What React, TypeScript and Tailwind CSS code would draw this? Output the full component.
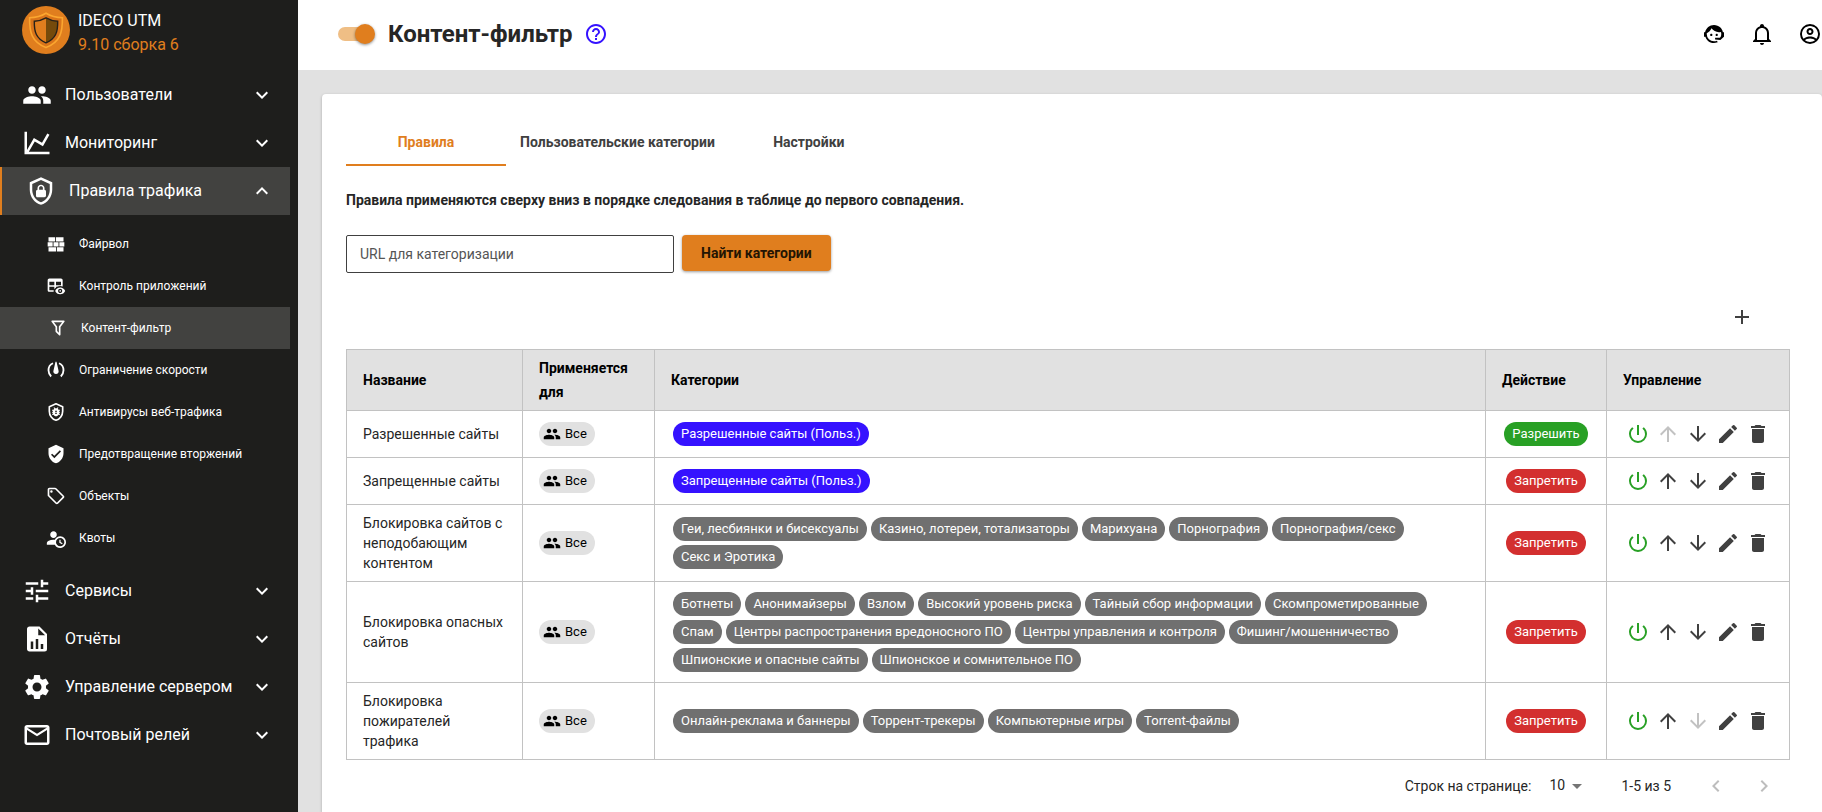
import React, { useState } from "react";
import {
  MdAdd,
  MdArrowDownward,
  MdArrowDropDown,
  MdArrowUpward,
  MdChevronLeft,
  MdChevronRight,
  MdDelete,
  MdEdit,
  MdExpandLess,
  MdExpandMore,
  MdHelpOutline,
  MdMailOutline,
  MdPeople,
  MdPowerSettingsNew,
  MdSettings,
  MdTune,
  MdVerifiedUser,
} from "react-icons/md";

type IconProps = { className?: string };

const glyph = (d: string) =>
  function Glyph({ className }: IconProps) {
    return (
      <svg viewBox="0 0 24 24" fill="currentColor" fillRule="evenodd" aria-hidden="true" className={className}>
        <path d={d} />
      </svg>
    );
  };

const ChartLine = glyph(
  "M16,11.78L20.24,4.45L21.97,5.45L16.74,14.5L10.23,10.75L5.46,19H22V21H2V3H4V17.54L9.5,8L16,11.78Z",
);
const ShieldLock = glyph(
  "M21,11C21,16.55 17.16,21.74 12,23C6.84,21.74 3,16.55 3,11V5L12,1L21,5V11M12,21C15.75,20 19,15.54 19,11.22V6.3L12,3.18L5,6.3V11.22C5,15.54 8.25,20 12,21M14.8,11V9.5C14.8,8.1 13.4,7 12,7C10.6,7 9.2,8.1 9.2,9.5V11C8.6,11 8,11.6 8,12.2V15.7C8,16.4 8.6,17 9.2,17H14.7C15.4,17 16,16.4 16,15.8V12.3C16,11.6 15.4,11 14.8,11M13.5,11H10.5V9.5C10.5,8.7 11.2,8.2 12,8.2C12.8,8.2 13.5,8.7 13.5,9.5V11Z",
);
const Wall = glyph(
  "M3,16H12V21H3V16M2,10H8V15H2V10M9,10H15V15H9V10M16,10H22V15H16V10M13,16H21V21H13V16M3,4H11V9H3V4M12,4H21V9H12V4Z",
);
const TableEye = glyph(
  "M17 16.88C17.56 16.88 18 17.32 18 17.88S17.56 18.88 17 18.88 16 18.43 16 17.88 16.44 16.88 17 16.88M17 13.88C19.73 13.88 22.06 15.54 23 17.88C22.06 20.22 19.73 21.88 17 21.88S11.94 20.22 11 17.88C11.94 15.54 14.27 13.88 17 13.88M17 15.38C15.62 15.38 14.5 16.5 14.5 17.88S15.62 20.38 17 20.38 19.5 19.26 19.5 17.88 18.38 15.38 17 15.38M18 3H4C2.9 3 2 3.9 2 5V17C2 18.1 2.9 19 4 19H9.42C9.26 18.68 9.12 18.34 9 18C9.12 17.66 9.26 17.32 9.42 17H4V13H10V15.97C10.55 15.11 11.23 14.37 12 13.76V13H13.15C14.31 12.36 15.62 12 17 12C18.06 12 19.07 12.21 20 12.59V5C20 3.9 19.1 3 18 3M10 11H4V7H10V11M18 11H12V7H18V11Z",
);
const FilterOutline = glyph(
  "M15,19.88C15.04,20.18 14.94,20.5 14.71,20.71C14.32,21.1 13.69,21.1 13.3,20.71L9.29,16.7C9.06,16.47 8.96,16.16 9,15.87V10.75L4.21,4.62C3.87,4.19 3.95,3.56 4.38,3.22C4.57,3.08 4.78,3 5,3H19C19.22,3 19.43,3.08 19.62,3.22C20.05,3.56 20.13,4.19 19.79,4.62L15,10.75V19.88M7.04,5L11,10.06V15.58L13,17.58V10.05L16.96,5H7.04Z",
);
const TagOutline = glyph(
  "M21.41 11.58L12.41 2.58A2 2 0 0 0 11 2H4A2 2 0 0 0 2 4V11A2 2 0 0 0 2.59 12.42L11.59 21.42A2 2 0 0 0 13 22A2 2 0 0 0 14.41 21.41L21.41 14.41A2 2 0 0 0 22 13A2 2 0 0 0 21.41 11.58M13 20L4 11V4H11L20 13M6.5 5A1.5 1.5 0 1 1 5 6.5A1.5 1.5 0 0 1 6.5 5Z",
);
const AccountClock = glyph(
  "M10.63,14.1C12.23,10.58 16.38,9.03 19.9,10.63C23.42,12.23 24.97,16.38 23.37,19.9C22.24,22.4 19.75,24 17,24C14.3,24 11.83,22.44 10.67,20H1V18C1.06,16.86 1.84,15.93 3.34,15.18C4.84,14.43 6.72,14.04 9,14C9.57,14 10.11,14.05 10.63,14.1M9,4C10.12,4.03 11.06,4.42 11.81,5.17C12.56,5.92 12.93,6.86 12.93,8C12.93,9.14 12.56,10.08 11.81,10.83C11.06,11.58 10.12,11.95 9,11.95C7.88,11.95 6.94,11.58 6.19,10.83C5.44,10.08 5.07,9.14 5.07,8C5.07,6.86 5.44,5.92 6.19,5.17C6.94,4.42 7.88,4.03 9,4M17,22A5,5 0 0,0 22,17A5,5 0 0,0 17,12A5,5 0 0,0 12,17A5,5 0 0,0 17,22M16,14H17.5V16.82L19.94,18.23L19.19,19.53L16,17.69V14Z",
);
const FileChart = glyph(
  "M13,9H18.5L13,3.5V9M6,2H14L20,8V20A2,2 0 0,1 18,22H6C4.89,22 4,21.1 4,20V4C4,2.89 4.89,2 6,2M7,20H9V14H7V20M11,20H13V12H11V20M15,20H17V16H15V20Z",
);
const FaceAgent = glyph(
  "M18.72,14.76C19.07,13.91 19.26,13 19.26,12C19.26,11.28 19.15,10.59 18.96,9.95C18.31,10.1 17.63,10.18 16.92,10.18C13.86,10.18 11.15,8.67 9.5,6.34C8.61,8.5 6.91,10.26 4.77,11.22C4.73,11.47 4.73,11.74 4.73,12A7.27,7.27 0 0,0 12,19.27C13.05,19.27 14.06,19.04 14.97,18.63C15.54,19.72 15.8,20.26 15.78,20.26C14.14,20.81 12.87,21.08 12,21.08C9.58,21.08 7.27,20.13 5.57,18.42C4.53,17.38 3.76,16.11 3.33,14.73H2V10.18H3.09C3.93,6.04 7.6,2.92 12,2.92C14.4,2.92 16.71,3.87 18.42,5.58C19.69,6.84 20.54,8.45 20.89,10.18H22V14.73H21.94L18.38,18L13.08,17.4V15.73H17.91L18.72,14.76M9.27,11.77C9.57,11.77 9.86,11.89 10.07,12.11C10.28,12.32 10.4,12.61 10.4,12.91C10.4,13.21 10.28,13.5 10.07,13.71C9.86,13.92 9.57,14.04 9.27,14.04C8.64,14.04 8.13,13.54 8.13,12.91C8.13,12.28 8.64,11.77 9.27,11.77M14.72,11.77C15.35,11.77 15.85,12.28 15.85,12.91C15.85,13.54 15.35,14.04 14.72,14.04C14.09,14.04 13.58,13.54 13.58,12.91A1.14,1.14 0 0,1 14.72,11.77Z",
);
const BellOutline = glyph(
  "M10 21H14C14 22.1 13.1 23 12 23S10 22.1 10 21M21 19V20H3V19L5 17V11C5 7.9 7 5.2 10 4.3V4C10 2.9 10.9 2 12 2S14 2.9 14 4V4.3C17 5.2 19 7.9 19 11V17L21 19M17 11C17 8.2 14.8 6 12 6S7 8.2 7 11V18H17V11Z",
);
const AccountCircle = glyph(
  "M12,2A10,10 0 0,0 2,12A10,10 0 0,0 12,22A10,10 0 0,0 22,12A10,10 0 0,0 12,2M7.07,18.28C7.5,17.38 10.12,16.5 12,16.5C13.88,16.5 16.5,17.38 16.93,18.28C15.57,19.36 13.86,20 12,20C10.14,20 8.43,19.36 7.07,18.28M18.36,16.83C16.93,15.09 13.46,14.5 12,14.5C10.54,14.5 7.07,15.09 5.64,16.83C4.62,15.5 4,13.82 4,12C4,7.59 7.59,4 12,4C16.41,4 20,7.59 20,12C20,13.82 19.38,15.5 18.36,16.83M12,6C10.06,6 8.5,7.56 8.5,9.5C8.5,11.44 10.06,13 12,13C13.94,13 15.5,11.44 15.5,9.5C15.5,7.56 13.94,6 12,6M12,11A1.5,1.5 0 0,1 10.5,9.5A1.5,1.5 0 0,1 12,8A1.5,1.5 0 0,1 13.5,9.5A1.5,1.5 0 0,1 12,11Z",
);

function SpeedGauge({ className }: IconProps) {
  return (
    <svg viewBox="0 0 24 24" aria-hidden="true" className={className}>
      <path
        d="M8.4 3.9C5 5.3 3 8.6 3 12.4C3 15.3 4.2 17.9 6.2 19.8M15.6 3.9C19 5.3 21 8.6 21 12.4C21 15.3 19.8 17.9 17.8 19.8"
        fill="none"
        stroke="currentColor"
        strokeWidth="2.2"
      />
      <path d="M11.4 2L9 12.6A3.2 3.2 0 1 0 15 12.6L12.6 2Z" fill="currentColor" />
    </svg>
  );
}

function ShieldBug({ className }: IconProps) {
  return (
    <svg viewBox="0 0 24 24" aria-hidden="true" className={className}>
      <path
        d="M12 2.1L20 5.6V11C20 16 16.6 20.7 12 21.9C7.4 20.7 4 16 4 11V5.6Z"
        fill="none"
        stroke="currentColor"
        strokeWidth="2"
        strokeLinejoin="round"
      />
      <path
        transform="translate(4.8 4.4) scale(0.6)"
        fill="currentColor"
        d="M20 8h-2.81c-.45-.78-1.07-1.45-1.82-1.96L17 4.41 15.59 3l-2.17 2.17C12.96 5.06 12.49 5 12 5s-.96.06-1.41.17L8.41 3 7 4.41l1.62 1.63C7.88 6.55 7.26 7.22 6.81 8H4v2h2.09c-.05.33-.09.66-.09 1v1H4v2h2v1c0 .34.04.67.09 1H4v2h2.81c1.04 1.79 2.97 3 5.19 3s4.15-1.21 5.19-3H20v-2h-2.09c.05-.33.09-.66.09-1v-1h2v-2h-2v-1c0-.34-.04-.67-.09-1H20V8zm-6 8h-4v-2h4v2zm0-4h-4v-2h4v2z"
      />
    </svg>
  );
}

function Logo() {
  return (
    <svg viewBox="0 0 48 48" role="img" aria-label="Ideco" className="size-12 shrink-0">
      <circle cx="24" cy="24" r="24" fill="#e07e1e" />
      <path
        d="M24 7.2C19 10.2 13.5 11.5 7.6 11.7C7.4 26 9.5 36 24 41.6C38.5 36 40.6 26 40.4 11.7C34.5 11.5 29 10.2 24 7.2Z"
        fill="#d9741a"
        stroke="#fba62f"
        strokeWidth="1.6"
      />
      <path d="M24 12C20 14.3 16.5 15.2 12.5 15.4C12.3 26 14.2 32.8 24 36.8Z" fill="#e07e1e" />
      <path d="M24 12C28 14.3 31.5 15.2 35.5 15.4C35.7 26 33.8 32.8 24 36.8Z" fill="#754a0b" />
      <path
        d="M24 11.8C20 14.1 16.5 15 12.3 15.2C12.1 26 14.2 32.8 24 36.8C33.8 32.8 35.9 26 35.7 15.2C31.5 15 28 14.1 24 11.8Z"
        fill="none"
        stroke="#26211a"
        strokeWidth="1.4"
      />
    </svg>
  );
}

type NavSection = {
  label: string;
  icon: React.ComponentType<IconProps>;
  children?: { label: string; icon: React.ComponentType<IconProps>; active?: boolean }[];
};

const NAV: NavSection[] = [
  { label: "Пользователи", icon: MdPeople },
  { label: "Мониторинг", icon: ChartLine },
  {
    label: "Правила трафика",
    icon: ShieldLock,
    children: [
      { label: "Файрвол", icon: Wall },
      { label: "Контроль приложений", icon: TableEye },
      { label: "Контент-фильтр", icon: FilterOutline, active: true },
      { label: "Ограничение скорости", icon: SpeedGauge },
      { label: "Антивирусы веб-трафика", icon: ShieldBug },
      { label: "Предотвращение вторжений", icon: MdVerifiedUser },
      { label: "Объекты", icon: TagOutline },
      { label: "Квоты", icon: AccountClock },
    ],
  },
  { label: "Сервисы", icon: MdTune },
  { label: "Отчёты", icon: FileChart },
  { label: "Управление сервером", icon: MdSettings },
  { label: "Почтовый релей", icon: MdMailOutline },
];

function Sidebar() {
  return (
    <aside className="w-[298px] shrink-0 bg-[#1e1e1c] pr-2 text-white">
      <div className="flex h-[71px] items-start gap-2 pt-1.5 pl-[22px]">
        <Logo />
        <div className="pt-[3px] text-base leading-6">
          <p>IDECO UTM</p>
          <p className="text-[#e07e1e]">9.10 сборка 6</p>
        </div>
      </div>
      <nav aria-label="Основное меню">
        {NAV.map(({ label, icon: Icon, children }) => (
          <div key={label}>
            <button
              type="button"
              aria-expanded={Boolean(children)}
              className={
                children
                  ? "flex h-12 w-full items-center gap-[13px] border-l-2 border-[#e07e1e] bg-[#424240] pr-4 pl-6 text-left text-base"
                  : "flex h-12 w-full items-center gap-[13px] pr-4 pl-[22px] text-left text-base"
              }
            >
              <Icon className="size-[30px] shrink-0" />
              <span className="flex-1">{label}</span>
              {children ? <MdExpandLess className="size-6" /> : <MdExpandMore className="size-6" />}
            </button>
            {children && (
              <ul className="py-2">
                {children.map(({ label: name, icon: SubIcon, active }) => (
                  <li key={name}>
                    <a
                      href="#"
                      aria-current={active ? "page" : undefined}
                      className={
                        active
                          ? "flex h-[42px] items-center gap-[13px] bg-[#424240] pl-12 text-xs"
                          : "flex h-[42px] items-center gap-[13px] pl-[46px] text-xs"
                      }
                    >
                      <SubIcon className="size-5 shrink-0" />
                      {name}
                    </a>
                  </li>
                ))}
              </ul>
            )}
          </div>
        ))}
      </nav>
    </aside>
  );
}

function Header() {
  const [enabled, setEnabled] = useState(true);
  return (
    <header className="flex h-[70px] items-center bg-white pb-0.5 pl-10 text-black">
      <label className="relative flex h-5 w-[37px] shrink-0 cursor-pointer items-center">
        <input
          type="checkbox"
          role="switch"
          aria-label="Контент-фильтр"
          checked={enabled}
          onChange={(e) => setEnabled(e.target.checked)}
          className="peer sr-only"
        />
        <span className="h-3.5 w-[34px] rounded-full bg-[#bdbdbd] peer-checked:bg-[#efbe85]" />
        <span className="absolute left-0 size-5 rounded-full bg-white shadow-[0_1px_3px_rgba(0,0,0,0.45)] peer-checked:right-0 peer-checked:left-auto peer-checked:bg-[#e07e1e]" />
      </label>
      <h1 className="ml-[13px] text-2xl font-bold text-[#262626]">Контент-фильтр</h1>
      <a href="#" aria-label="Справка" className="ml-3 text-[#3512ff]">
        <MdHelpOutline className="size-6" />
      </a>
      <div className="ml-auto flex items-center gap-6">
        <button type="button" aria-label="Поддержка">
          <FaceAgent className="size-6" />
        </button>
        <button type="button" aria-label="Уведомления">
          <BellOutline className="size-6" />
        </button>
        <button type="button" aria-label="Профиль">
          <AccountCircle className="size-6" />
        </button>
      </div>
    </header>
  );
}

type Rule = { name: string; custom?: boolean; allow?: boolean; categories: string[] };

const RULES: Rule[] = [
  { name: "Разрешенные сайты", custom: true, allow: true, categories: ["Разрешенные сайты (Польз.)"] },
  { name: "Запрещенные сайты", custom: true, categories: ["Запрещенные сайты (Польз.)"] },
  {
    name: "Блокировка сайтов с неподобающим контентом",
    categories: [
      "Геи, лесбиянки и бисексуалы",
      "Казино, лотереи, тотализаторы",
      "Марихуана",
      "Порнография",
      "Порнография/секс",
      "Секс и Эротика",
    ],
  },
  {
    name: "Блокировка опасных сайтов",
    categories: [
      "Ботнеты",
      "Анонимайзеры",
      "Взлом",
      "Высокий уровень риска",
      "Тайный сбор информации",
      "Скомпрометированные",
      "Спам",
      "Центры распространения вредоносного ПО",
      "Центры управления и контроля",
      "Фишинг/мошенничество",
      "Шпионские и опасные сайты",
      "Шпионское и сомнительное ПО",
    ],
  },
  {
    name: "Блокировка пожирателей трафика",
    categories: ["Онлайн-реклама и баннеры", "Торрент-трекеры", "Компьютерные игры", "Torrent-файлы"],
  },
];

const TABS = ["Правила", "Пользовательские категории", "Настройки"];

function IconButton({
  label,
  disabled,
  className = "text-[#404040]",
  children,
}: {
  label: string;
  disabled?: boolean;
  className?: string;
  children: React.ReactNode;
}) {
  return (
    <button
      type="button"
      aria-label={label}
      disabled={disabled}
      className={`flex size-[30px] items-center justify-center disabled:text-[#c2c2c2] ${className}`}
    >
      {children}
    </button>
  );
}

function RulesTable() {
  return (
    <table className="w-full table-fixed border-collapse text-sm">
      <colgroup>
        <col className="w-[176px]" />
        <col className="w-[132px]" />
        <col />
        <col className="w-[121px]" />
        <col className="w-[183px]" />
      </colgroup>
      <thead>
        <tr className="bg-[#e1e1e1] text-left leading-6 text-black">
          {["Название", "Применяется для", "Категории", "Действие", "Управление"].map((title) => (
            <th key={title} scope="col" className="border border-[#c2c2c2] px-4 py-1.5 font-bold">
              {title}
            </th>
          ))}
        </tr>
      </thead>
      <tbody>
        {RULES.map((rule, index) => (
          <tr key={rule.name}>
            <td className="border border-[#c2c2c2] px-4 py-2 leading-5">{rule.name}</td>
            <td className="border border-[#c2c2c2] px-4 py-2">
              <span className="inline-flex h-6 items-center gap-1 rounded-full bg-[#e1e1e1] pr-2 pl-1 align-middle text-[13px] text-black">
                <MdPeople className="size-[18px]" />
                Все
              </span>
            </td>
            <td className="border border-[#c2c2c2] px-4 py-2">
              <ul className="flex flex-wrap gap-1 p-0.5">
                {rule.categories.map((category) => (
                  <li
                    key={category}
                    className={
                      rule.custom
                        ? "flex h-6 items-center rounded-full bg-[#3512ff] px-2 text-[13px] text-white"
                        : "flex h-6 items-center rounded-full bg-[#707070] px-2 text-[13px] text-white"
                    }
                  >
                    {category}
                  </li>
                ))}
              </ul>
            </td>
            <td className="border border-[#c2c2c2] py-2 text-center">
              <span
                className={
                  rule.allow
                    ? "inline-flex h-6 items-center rounded-full bg-[#28a025] px-2 align-middle text-[13px] text-white"
                    : "inline-flex h-6 items-center rounded-full bg-[#d32f2f] px-2 align-middle text-[13px] text-white"
                }
              >
                {rule.allow ? "Разрешить" : "Запретить"}
              </span>
            </td>
            <td className="border border-[#c2c2c2] py-2 pl-4">
              <div className="flex">
                <IconButton label="Выключить" className="text-[#28a025]">
                  <MdPowerSettingsNew className="size-6" />
                </IconButton>
                <IconButton label="Выше" disabled={index === 0}>
                  <MdArrowUpward className="size-6" />
                </IconButton>
                <IconButton label="Ниже" disabled={index === RULES.length - 1}>
                  <MdArrowDownward className="size-6" />
                </IconButton>
                <IconButton label="Редактировать">
                  <MdEdit className="size-6" />
                </IconButton>
                <IconButton label="Удалить">
                  <MdDelete className="size-6" />
                </IconButton>
              </div>
            </td>
          </tr>
        ))}
      </tbody>
    </table>
  );
}

export default function App() {
  const [tab, setTab] = useState(0);
  return (
    <div className="flex min-h-screen bg-[#e1e1e1] font-[Roboto,sans-serif] text-[#262626]">
      <Sidebar />
      <div className="flex min-w-0 flex-1 flex-col">
        <Header />
        <main className="mt-6 ml-6 flex-1 rounded-t bg-white pt-6 pr-8 pl-6 shadow-[0_1px_3px_rgba(0,0,0,0.25)]">
          <div role="tablist" className="flex h-12">
            {TABS.map((title, index) => (
              <button
                key={title}
                type="button"
                role="tab"
                aria-selected={index === tab}
                onClick={() => setTab(index)}
                className={
                  index === tab
                    ? "min-w-40 border-y-2 border-t-transparent border-b-[#e07e1e] px-3.5 text-sm font-bold text-[#e07e1e]"
                    : "min-w-40 border-y-2 border-transparent px-3.5 text-sm font-bold text-[#404040]"
                }
              >
                {title}
              </button>
            ))}
          </div>
          <p className="mt-6 text-sm font-bold">
            Правила применяются сверху вниз в порядке следования в таблице до первого совпадения.
          </p>
          <form className="mt-[25px] flex items-start gap-2" onSubmit={(e) => e.preventDefault()}>
            <input
              type="text"
              aria-label="URL для категоризации"
              placeholder="URL для категоризации"
              className="h-[38px] w-[328px] rounded-xs border border-[#404040] px-[13px] text-sm placeholder:text-[#555555]"
            />
            <button
              type="submit"
              className="h-9 rounded bg-[#e07e1e] px-[19px] text-sm font-bold text-[#241503] shadow-[0_1px_3px_rgba(0,0,0,0.4)]"
            >
              Найти категории
            </button>
          </form>
          <div className="flex justify-end pt-[29px] pr-[33px] pb-[17px]">
            <IconButton label="Добавить правило">
              <MdAdd className="size-6" />
            </IconButton>
          </div>
          <RulesTable />
          <div className="flex h-[52px] items-center justify-end pr-0.5 text-sm">
            <label htmlFor="page-size">Строк на странице:</label>
            <div className="relative ml-4 flex items-center">
              <select
                id="page-size"
                defaultValue="10"
                className="h-6 w-[42px] appearance-none bg-transparent pb-0.5 pl-0.5"
              >
                <option>10</option>
                <option>25</option>
                <option>50</option>
              </select>
              <MdArrowDropDown className="pointer-events-none absolute right-0 size-6 text-[#757575]" />
            </div>
            <span className="ml-8">1-5 из 5</span>
            <div className="ml-[21px] flex">
              <button type="button" disabled aria-label="Предыдущая страница" className="flex size-12 items-center justify-center text-[#bdbdbd]">
                <MdChevronLeft className="size-6" />
              </button>
              <button type="button" disabled aria-label="Следующая страница" className="flex size-12 items-center justify-center text-[#bdbdbd]">
                <MdChevronRight className="size-6" />
              </button>
            </div>
          </div>
        </main>
      </div>
    </div>
  );
}
